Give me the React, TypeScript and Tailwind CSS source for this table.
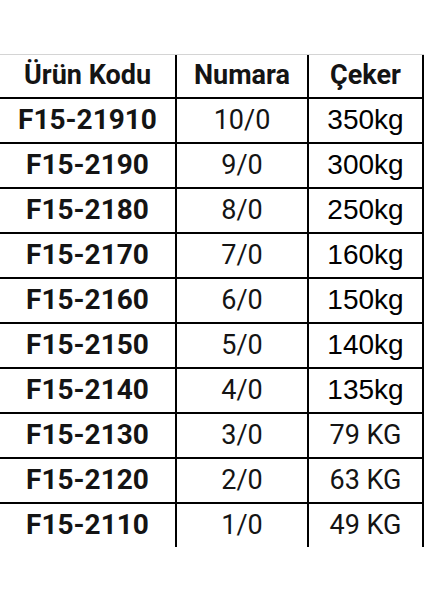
import React from "react";

const rows: [string, string, string, boolean][] = [
  ["F15-21910", "10/0", "350kg", true],
  ["F15-2190", "9/0", "300kg", true],
  ["F15-2180", "8/0", "250kg", true],
  ["F15-2170", "7/0", "160kg", true],
  ["F15-2160", "6/0", "150kg", true],
  ["F15-2150", "5/0", "140kg", true],
  ["F15-2140", "4/0", "135kg", true],
  ["F15-2130", "3/0", "79 KG", false],
  ["F15-2120", "2/0", "63 KG", false],
  ["F15-2110", "1/0", "49 KG", false],
];

export default function App() {
  return (
    <div className="w-[424px] h-[600px] bg-white text-[#141414] font-['Roboto',sans-serif]">
      <div className="h-[54px]" />
      <div className="border-t border-[#d4d4d4]">
        <div className="flex h-[44px] border-b-2 border-black">
          <div className="w-[177px] border-r-2 border-black flex items-center justify-center text-[27px] font-bold pb-[2px]">
            Ürün Kodu
          </div>
          <div className="w-[132px] border-r-2 border-black flex items-center justify-center text-[27px] font-bold pb-[2px]">
            Numara
          </div>
          <div className="w-[115px] border-r-2 border-black flex items-center justify-center text-[27px] font-bold pb-[2px]">
            Çeker
          </div>
        </div>
        {rows.map(([code, num, cek, arial], i) => (
          <div
            key={code}
            className={
              i < rows.length - 1
                ? "flex h-[45px] border-b-2 border-black"
                : "flex h-[43px]"
            }
          >
            <div className="w-[177px] border-r-2 border-black flex items-center justify-center text-[28px] font-bold pb-[1px]">
              {code}
            </div>
            <div className="w-[132px] border-r-2 border-black flex items-center justify-center text-[27px] pb-[1px]">
              {num}
            </div>
            <div
              className={
                arial
                  ? "w-[115px] border-r-2 border-black flex items-center justify-center text-[28px] text-black font-['Liberation_Sans',Arial,sans-serif] pb-[1px]"
                  : "w-[115px] border-r-2 border-black flex items-center justify-center text-[27px] pb-[1px]"
              }
            >
              {cek}
            </div>
          </div>
        ))}
      </div>
    </div>
  );
}
